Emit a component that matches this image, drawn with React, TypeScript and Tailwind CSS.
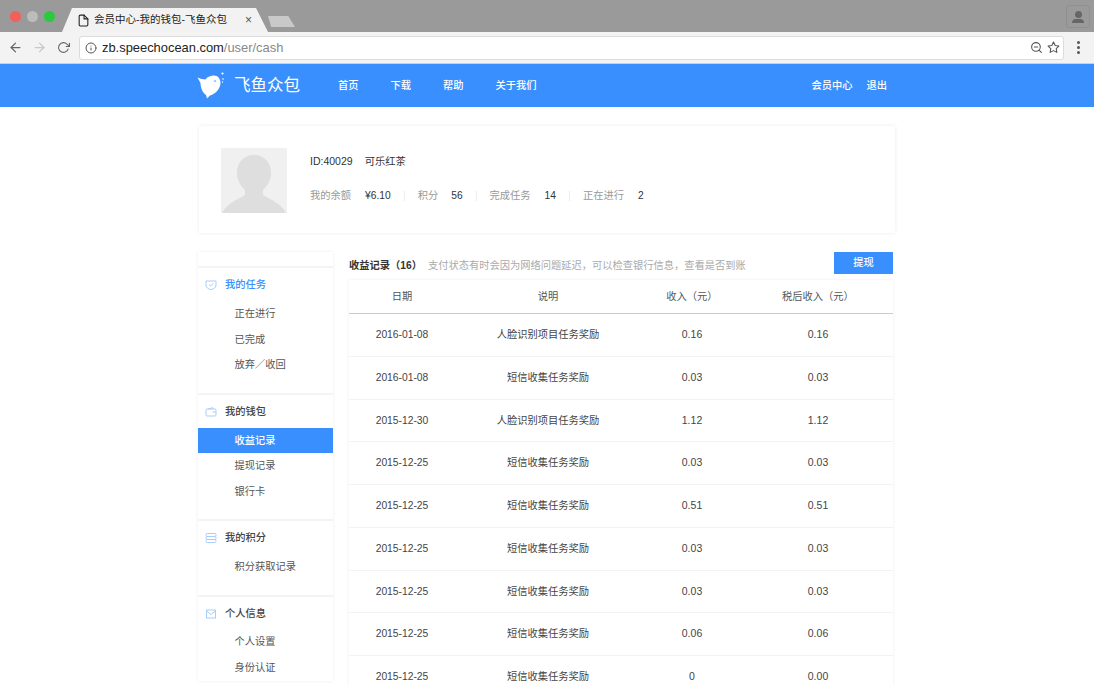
import React from "react";
import { FiArrowLeft, FiArrowRight, FiRotateCw, FiInfo, FiZoomOut, FiStar, FiFile } from "react-icons/fi";

const rows = [
  ["2016-01-08", "人脸识别项目任务奖励", "0.16", "0.16"],
  ["2016-01-08", "短信收集任务奖励", "0.03", "0.03"],
  ["2015-12-30", "人脸识别项目任务奖励", "1.12", "1.12"],
  ["2015-12-25", "短信收集任务奖励", "0.03", "0.03"],
  ["2015-12-25", "短信收集任务奖励", "0.51", "0.51"],
  ["2015-12-25", "短信收集任务奖励", "0.03", "0.03"],
  ["2015-12-25", "短信收集任务奖励", "0.03", "0.03"],
  ["2015-12-25", "短信收集任务奖励", "0.06", "0.06"],
  ["2015-12-25", "短信收集任务奖励", "0", "0.00"],
];

const BrowserBar = () => (
  <div className="h-16 shrink-0">
    <div className="h-8 bg-[#9a9a9a] flex items-end relative">
      <div className="flex gap-[6px] absolute left-[10px] top-[11px]">
        <span className="w-[11px] h-[11px] rounded-full bg-[#f2605a]" />
        <span className="w-[11px] h-[11px] rounded-full bg-[#bcbcbc]" />
        <span className="w-[11px] h-[11px] rounded-full bg-[#2bc840]" />
      </div>
      <div className="ml-[62px] w-[206px] h-6 bg-[#f2f2f2] [clip-path:polygon(0_100%,10px_0,194px_0,100%_100%)] flex items-center pl-[15px] text-[10.5px] text-[#222]">
        <FiFile size={13} className="text-[#222] mr-[4px]" />
        <span>会员中心-我的钱包-飞鱼众包</span>
        <span className="ml-[18px] text-[#555] text-[12px]">×</span>
      </div>
      <div className="mb-[5px] w-[27px] h-[11px] bg-[#c9c9c9] [clip-path:polygon(0_0,75%_0,100%_100%,12%_100%)]" />
      <div className="absolute right-[4px] top-[5px] w-[24px] h-[23px] rounded-[3px] border border-[#8f8f8f] flex flex-col items-center justify-center">
        <span className="w-[7px] h-[7px] rounded-full bg-[#666]" />
        <span className="w-[12px] h-[4px] rounded-t-[4px] bg-[#666] mt-[1px]" />
      </div>
    </div>
    <div className="h-8 bg-[#f3f3f3] border-b border-[#cfcfcf] flex items-center pl-[8px] pr-[8px]">
      <FiArrowLeft size={15} className="text-[#666]" />
      <FiArrowRight size={15} className="text-[#c8c8c8] ml-[9px]" />
      <FiRotateCw size={13} className="text-[#666] ml-[10px]" />
      <div className="ml-[9px] h-[24px] w-[985px] bg-white border border-[#dcdcdc] rounded-[3px] flex items-center pl-[5px] pr-[3px]">
        <FiInfo size={12} className="text-[#555]" />
        <span className="ml-[5px] text-[12.9px] text-[#222]">
          zb.speechocean.com<span className="text-[#888]">/user/cash</span>
        </span>
        <FiZoomOut size={13} className="ml-auto text-[#555]" />
        <FiStar size={13} className="ml-[4px] text-[#555]" />
      </div>
      <div className="ml-[13px] flex flex-col gap-[2px]">
        <span className="w-[3px] h-[3px] rounded-full bg-[#555]" />
        <span className="w-[3px] h-[3px] rounded-full bg-[#555]" />
        <span className="w-[3px] h-[3px] rounded-full bg-[#555]" />
      </div>
    </div>
  </div>
);

const Logo = () => (
  <svg width="30" height="30" viewBox="0 0 30 30" className="shrink-0">
    <path d="M1.5 6.5 C4 7.5 7 8.5 9.5 8.5 C11.5 5.5 15 4.5 18 4.5 C22 4.5 24.5 8 24.5 12 C24.5 17 20 23 14 24.5 L11 27.5 L10 24 C6.5 22 4.5 16 4.5 12 Z" fill="#fff" />
    <circle cx="19" cy="10" r="1.3" fill="#a9cdfb" />
    <circle cx="26.5" cy="2.5" r="1.1" fill="#fff" />
    <circle cx="27" cy="8" r="0.8" fill="#fff" />
    <circle cx="26.5" cy="11" r="0.7" fill="#fff" />
  </svg>
);

const NavBar = () => (
  <div className="h-[43px] shrink-0 bg-[#3a8ffe] text-white flex items-center pl-[196px] text-[10.25px] font-medium">
    <Logo />
    <span className="ml-[8px] w-[66px] text-[16.5px] font-normal whitespace-nowrap">飞鱼众包</span>
    <div className="ml-[38px] flex gap-[32px]">
      <span>首页</span>
      <span>下载</span>
      <span>帮助</span>
      <span>关于我们</span>
    </div>
    <div className="ml-[275px] flex gap-[14px]">
      <span>会员中心</span>
      <span>退出</span>
    </div>
  </div>
);

const Profile = () => (
  <div className="ml-[199px] w-[696px] h-[107px] shrink-0 mt-[19px] shadow-[0_0_4px_rgba(0,0,0,0.08)] flex pl-[22px] pt-[22px]">
    <div className="w-[66px] h-[65px] bg-[#f0f0f0] overflow-hidden shrink-0">
      <svg viewBox="0 0 66 65" width="66" height="65">
        <path d="M33 7 C43 7 50 14 50 25 C50 33 46 38 42 42 L42 47 C50 52 60 55 65 65 L1 65 C6 55 16 52 24 47 L24 42 C20 38 16 33 16 25 C16 14 23 7 33 7 Z" fill="#dedede" />
      </svg>
    </div>
    <div className="ml-[23px] text-[10.25px]">
      <div className="mt-[7px] text-[#333] flex h-[13px] items-center">
        <span className="text-[10.5px]">ID:40029</span>
        <span className="ml-[12px]">可乐红茶</span>
      </div>
      <div className="mt-[21px] flex h-[13px] items-center">
        <span className="text-[#999]">我的余额</span>
        <span className="ml-[14px] text-[#333]">¥6.10</span>
        <span className="mx-[13px] w-px h-[10px] bg-[#eee]" />
        <span className="text-[#999]">积分</span>
        <span className="ml-[13px] text-[#333]">56</span>
        <span className="mx-[13px] w-px h-[10px] bg-[#eee]" />
        <span className="text-[#999]">完成任务</span>
        <span className="ml-[14px] text-[#333]">14</span>
        <span className="mx-[13px] w-px h-[10px] bg-[#eee]" />
        <span className="text-[#999]">正在进行</span>
        <span className="ml-[14px] text-[#333]">2</span>
      </div>
    </div>
  </div>
);

const sections = [
  { icon: "task", title: "我的任务", items: ["正在进行", "已完成", "放弃／收回"], h: 127 },
  { icon: "wallet", title: "我的钱包", items: ["收益记录", "提现记录", "银行卡"], h: 126 },
  { icon: "db", title: "我的积分", items: ["积分获取记录"], h: 76 },
  { icon: "mail", title: "个人信息", items: ["个人设置", "身份认证"], h: 84 },
];

const SideIcon = ({ name }: { name: string }) => {
  const c = "#a9cdfb";
  return (
    <svg width="12" height="10" viewBox="0 0 12 10" fill="none" stroke={c} strokeWidth="1" className="shrink-0">
      {name === "task" && <><path d="M1 1 H11 V5 C11 8 8 9.5 6 9.5 C4 9.5 1 8 1 5 Z" /><path d="M4 4.5 L5.7 6 L8.5 3.5" /></>}
      {name === "wallet" && <><rect x="1" y="2" width="10" height="7" rx="1" /><path d="M3 2 L8 0.7 V2" /><path d="M7.5 5 H11" /></>}
      {name === "db" && <><rect x="1" y="0.5" width="10" height="3" rx="1.2" /><rect x="1" y="3.5" width="10" height="3" rx="1.2" /><rect x="1" y="6.5" width="10" height="3" rx="1.2" /></>}
      {name === "mail" && <><rect x="1.5" y="1" width="9" height="8" /><path d="M1.5 2 L6 5.5 L10.5 2" /></>}
    </svg>
  );
};

const Sidebar = () => (
  <div className="w-[135px] shrink-0 self-start text-[10.25px] text-[#555] shadow-[0_0_3px_rgba(0,0,0,0.08)]">
    <div className="h-[16px] border-b-2 border-[#f4f4f4]" />
    {sections.map((s) => (
      <div key={s.title} style={{ height: s.h }} className="border-b-2 border-[#f4f4f4] last:border-b-0">
        <div className={`h-[33px] flex items-center pl-[7px] font-medium ${s.icon === "task" ? "text-[#3a8ffe]" : "text-[#444]"}`}>
          <SideIcon name={s.icon} />
          <span className="ml-[8px]">{s.title}</span>
        </div>
        <div className={s.icon === "mail" ? "mt-[-1px]" : s.icon === "wallet" ? "mt-[-0.5px]" : ""}>
          {s.items.map((it) => (
            <div key={it} className={`h-[25.6px] flex items-center pl-[36.5px] ${it === "收益记录" ? "bg-[#3a8ffe] text-white font-medium" : ""}`}>{it}</div>
          ))}
        </div>
      </div>
    ))}
  </div>
);

const Records = () => (
  <div className="ml-[16px] w-[544px] shrink-0 text-[10.25px]">
    <div className="h-[28px] flex items-center">
      <span className="font-bold text-[#333]">收益记录（16）</span>
      <span className="ml-[6px] text-[#aaa]">支付状态有时会因为网络问题延迟，可以检查银行信息，查看是否到账</span>
      <button className="ml-auto w-[59px] h-[22px] mb-[6px] bg-[#3a8ffe] text-white font-medium">提现</button>
    </div>
    <div className="shadow-[0_0_3px_rgba(0,0,0,0.08)] text-[#444]">
      <div className="grid grid-cols-[106px_186px_102px_150px] h-[34px] items-center text-center border-b border-[#ccc] text-[#555]">
        <span>日期</span>
        <span>说明</span>
        <span>收入（元）</span>
        <span>税后收入（元）</span>
      </div>
      {rows.map((r, i) => (
        <div key={i} className="grid grid-cols-[106px_186px_102px_150px] h-[42.75px] items-center text-center border-b border-[#f3f3f3]">
          <span className="text-[10.3px]">{r[0]}</span>
          <span>{r[1]}</span>
          <span className="text-[10.5px]">{r[2]}</span>
          <span className="text-[10.5px]">{r[3]}</span>
        </div>
      ))}
    </div>
  </div>
);

export default function App() {
  return (
    <div className="h-[684px] w-[1094px] overflow-hidden bg-white flex flex-col font-['Liberation_Sans','Noto_Sans_CJK_SC',sans-serif]">
      <BrowserBar />
      <NavBar />
      <Profile />
      <div className="flex ml-[198px] mt-[19px] shrink-0">
        <Sidebar />
        <Records />
      </div>
    </div>
  );
}
